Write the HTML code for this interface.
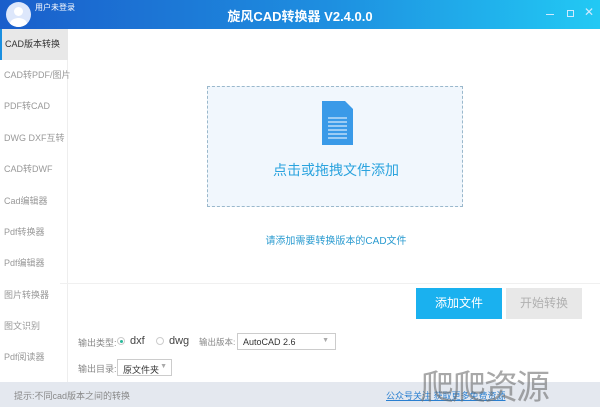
<!DOCTYPE html>
<html><head><meta charset="utf-8"><style>
*{margin:0;padding:0;box-sizing:border-box}
body{width:600px;height:407px;overflow:hidden;background:#fff;font-family:"Liberation Sans","Noto Sans CJK SC",sans-serif;position:relative}
.hdr{position:absolute;left:0;top:0;width:600px;height:29px;background:linear-gradient(90deg,#1a5ecb,#1e8fe0 55%,#22c9f4)}
.av{position:absolute;left:6px;top:2px;width:25px;height:25px;border-radius:50%;background:#dde7fb;overflow:hidden}
.av:before{content:"";position:absolute;left:8px;top:5px;width:9px;height:9px;border-radius:50%;background:#fff}
.av:after{content:"";position:absolute;left:4px;top:16px;width:17px;height:12px;border-radius:50%;background:#fff}
.ttl{position:absolute;left:0;width:600px;top:6px;text-align:center;color:#fff;font-weight:bold;font-size:13px}
.side{position:absolute;left:0;top:29px;width:68px;height:353px;border-right:1px solid #eee}
.it{position:absolute;left:0;width:68px;height:31px;line-height:31px;padding-left:4px;font-size:9px;color:#999;white-space:nowrap}
.act{background:#e8e8e8;color:#333;border-left:2px solid #1a8fe0;padding-left:3px}
.drop{position:absolute;left:207px;top:86px;width:256px;height:121px;border:1px dashed #9ab8cc;background:#f1f7fd}
.s{position:absolute;font-size:9px;color:#888;white-space:nowrap}
</style></head><body>
<div class="hdr"></div>
<div class="av"></div>
<div style="position:absolute;left:35px;top:2px;color:#fff;font-size:8px">用户未登录</div>
<div class="ttl">旋风CAD转换器 V2.4.0.0</div>
<div style="position:absolute;left:546px;top:14px;width:8px;height:1px;background:#cfeaff"></div>
<div style="position:absolute;left:567px;top:10px;width:7px;height:7px;border:1px solid #cfeaff"></div>
<div style="position:absolute;left:584px;top:5px;color:#cfeaff;font-size:12px">✕</div>
<div class="side">
<div class="it act" style="top:0">CAD版本转换</div>
<div class="it" style="top:31px">CAD转PDF/图片</div>
<div class="it" style="top:62px">PDF转CAD</div>
<div class="it" style="top:94px">DWG DXF互转</div>
<div class="it" style="top:125px">CAD转DWF</div>
<div class="it" style="top:157px">Cad编辑器</div>
<div class="it" style="top:188px">Pdf转换器</div>
<div class="it" style="top:219px">Pdf编辑器</div>
<div class="it" style="top:251px">图片转换器</div>
<div class="it" style="top:282px">图文识别</div>
<div class="it" style="top:313px">Pdf阅读器</div>
</div>
<div class="drop"></div>
<svg style="position:absolute;left:320px;top:101px" width="34" height="45" viewBox="0 0 34 45"><path d="M2 0H25L33 8V44H2Z" fill="#3a9ae8"/><g stroke="#fff" stroke-width="1"><line x1="8" y1="17" x2="27" y2="17"/><line x1="8" y1="21" x2="27" y2="21"/><line x1="8" y1="25" x2="27" y2="25"/><line x1="8" y1="29" x2="27" y2="29"/><line x1="8" y1="33" x2="27" y2="33"/><line x1="8" y1="37" x2="27" y2="37"/></g></svg>
<div style="position:absolute;left:207px;width:258px;top:160px;text-align:center;color:#2aa3de;font-size:14px">点击或拖拽文件添加</div>
<div style="position:absolute;left:207px;width:258px;top:232px;text-align:center;color:#2a9bd0;font-size:10px">请添加需要转换版本的CAD文件</div>
<div style="position:absolute;left:60px;top:283px;width:540px;height:1px;background:#f0f0f0"></div>
<div style="position:absolute;left:416px;top:288px;width:86px;height:31px;background:#1ab1ef;color:#fff;font-size:12px;text-align:center;line-height:31px">添加文件</div>
<div style="position:absolute;left:506px;top:288px;width:76px;height:31px;background:#e8e8e8;color:#b0b0b0;font-size:12px;text-align:center;line-height:31px">开始转换</div>
<div class="s" style="left:78px;top:336px">输出类型:</div>
<div style="position:absolute;left:117px;top:337px;width:8px;height:8px;border:1px solid #ccc;border-radius:50%"><div style="position:absolute;left:1.5px;top:1.5px;width:3px;height:3px;border-radius:50%;background:#2ab89a"></div></div>
<div class="s" style="left:130px;top:335px;font-size:11px;color:#444">dxf</div>
<div style="position:absolute;left:156px;top:337px;width:8px;height:8px;border:1px solid #ccc;border-radius:50%"></div>
<div class="s" style="left:169px;top:335px;font-size:11px;color:#444">dwg</div>
<div class="s" style="left:199px;top:336px;font-size:8.5px">输出版本:</div>
<div style="position:absolute;left:237px;top:333px;width:99px;height:17px;border:1px solid #ccc;font-size:9px;color:#333;padding:3px 5px;background:#fff">AutoCAD 2.6<span style="position:absolute;right:6px;top:3px;color:#aaa;font-size:7px">▼</span></div>
<div class="s" style="left:78px;top:362px">输出目录:</div>
<div style="position:absolute;left:117px;top:359px;width:55px;height:17px;border:1px solid #ccc;font-size:9px;color:#333;padding:3px 5px">原文件夹<span style="position:absolute;right:4px;top:3px;color:#aaa;font-size:7px">▼</span></div>
<div style="position:absolute;left:0;top:382px;width:600px;height:25px;background:#e4e8ef"></div>
<div class="s" style="left:14px;top:389px">提示:不同cad版本之间的转换</div>
<div class="s" style="left:386px;top:389px;color:#2a7fd0;text-decoration:underline">公众号关注 获取更多免费资源</div>
<div style="position:absolute;left:420px;top:368px;font-size:34px;color:rgba(110,110,110,.6);letter-spacing:-2px;line-height:40px">爬爬资源</div>
</body></html>
